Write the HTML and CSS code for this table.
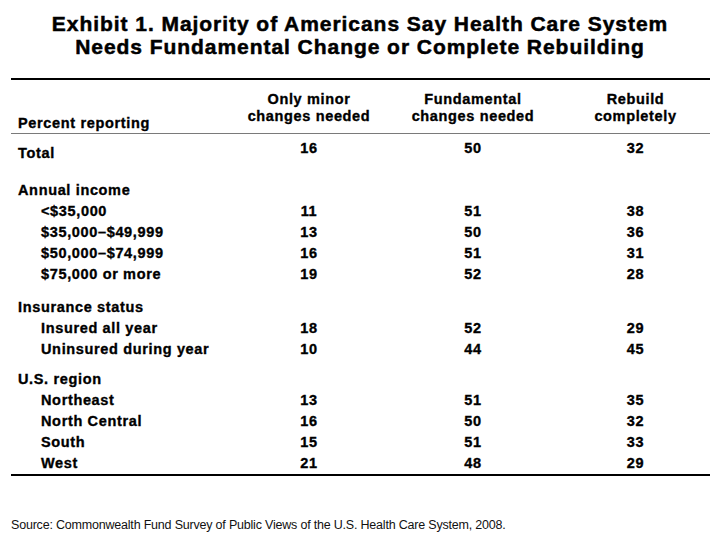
FILE: index.html
```html
<!DOCTYPE html>
<html lang="en">
<head>
<meta charset="utf-8">
<title>Exhibit 1</title>
<link rel="stylesheet" href="styles.css">
</head>
<body>
<h1 class="title">Exhibit 1. Majority of Americans Say Health Care System<br>Needs Fundamental Change or Complete Rebuilding</h1>
<div class="table">
  <div class="row head">
    <div class="label">Percent reporting</div>
    <div class="col">Only minor<br>changes needed</div>
    <div class="col">Fundamental<br>changes needed</div>
    <div class="col">Rebuild<br>completely</div>
  </div>
  <div class="row total">
    <div class="label">Total</div>
    <div class="num">16</div>
    <div class="num">50</div>
    <div class="num">32</div>
  </div>
  <div class="group g-income">
    <div class="row"><div class="label">Annual income</div></div>
    <div class="row"><div class="label sub">&lt;$35,000</div><div class="num">11</div><div class="num">51</div><div class="num">38</div></div>
    <div class="row"><div class="label sub">$35,000–$49,999</div><div class="num">13</div><div class="num">50</div><div class="num">36</div></div>
    <div class="row"><div class="label sub">$50,000–$74,999</div><div class="num">16</div><div class="num">51</div><div class="num">31</div></div>
    <div class="row"><div class="label sub">$75,000 or more</div><div class="num">19</div><div class="num">52</div><div class="num">28</div></div>
  </div>
  <div class="group g-ins">
    <div class="row"><div class="label">Insurance status</div></div>
    <div class="row"><div class="label sub">Insured all year</div><div class="num">18</div><div class="num">52</div><div class="num">29</div></div>
    <div class="row"><div class="label sub">Uninsured during year</div><div class="num">10</div><div class="num">44</div><div class="num">45</div></div>
  </div>
  <div class="group g-region">
    <div class="row"><div class="label">U.S. region</div></div>
    <div class="row"><div class="label sub">Northeast</div><div class="num">13</div><div class="num">51</div><div class="num">35</div></div>
    <div class="row"><div class="label sub">North Central</div><div class="num">16</div><div class="num">50</div><div class="num">32</div></div>
    <div class="row"><div class="label sub">South</div><div class="num">15</div><div class="num">51</div><div class="num">33</div></div>
    <div class="row"><div class="label sub">West</div><div class="num">21</div><div class="num">48</div><div class="num">29</div></div>
  </div>
</div>
<p class="source">Source: Commonwealth Fund Survey of Public Views of the U.S. Health Care System, 2008.</p>
</body>
</html>
```
FILE: styles.css
```css
html, body {
  margin: 0;
  padding: 0;
  background: #ffffff;
  color: #000000;
}
body {
  width: 720px;
  height: 540px;
  overflow: hidden;
  font-family: "Liberation Sans", Arial, sans-serif;
}
.title {
  margin: 0;
  padding-top: 12px;
  font-size: 21px;
  line-height: 23px;
  font-weight: bold;
  letter-spacing: 0.95px;
  text-align: center;
  -webkit-text-stroke: 0.5px #000;
}
.table {
  margin: 20px 0 0 11px;
  width: 699px;
  border-top: 2px solid #000;
  border-bottom: 2px solid #000;
  font-size: 14.5px;
  font-weight: bold;
  letter-spacing: 0.65px;
  -webkit-text-stroke: 0.35px #000;
}
.row {
  display: grid;
  grid-template-columns: 222px 152px 176px 149px;
  line-height: 21px;
}
.label {
  padding-left: 7px;
  white-space: nowrap;
}
.label.sub {
  padding-left: 30px;
}
.num, .col {
  text-align: center;
}
.head {
  height: 53px;
  align-items: end;
  line-height: 16.5px;
  border-bottom: 1px solid #7a7a7a;
}
.head .col {
  padding-bottom: 9px;
}
.head .label {
  padding-bottom: 2px;
}
.total {
  align-items: start;
}
.total .label {
  padding-top: 9px;
}
.total .num {
  padding-top: 4px;
}
.g-income {
  margin-top: 16px;
}
.g-ins {
  margin-top: 12px;
}
.g-region {
  margin-top: 9px;
}
.source {
  margin: 42px 0 0 11px;
  font-size: 12.5px;
  line-height: 15px;
  letter-spacing: -0.2px;
  color: #111;
}
```
